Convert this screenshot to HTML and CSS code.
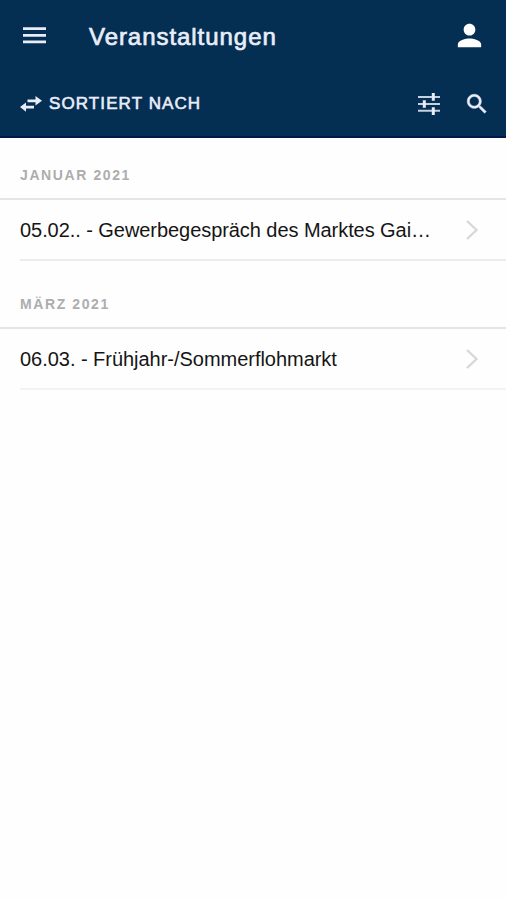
FILE: index.html
```
<!DOCTYPE html>
<html lang="de">
<head>
  <meta charset="UTF-8">
  <meta name="viewport" content="width=device-width, initial-scale=1.0">
  <title>Veranstaltungen</title>
  <link rel="stylesheet" href="styles.css">
</head>
<body>

  <header class="header">
    <div class="title-bar">
      <svg class="icon-menu" width="23" height="17" viewBox="0 0 23 17">
        <path d="M0 .3h23v2.8H0zM0 7h23v2.8H0zM0 13.5h23v2.8H0z"/>
      </svg>
      <h1>Veranstaltungen</h1>
      <svg class="icon-user" width="35" height="35" viewBox="0 0 24 24">
        <path d="M12 12c2.21 0 4-1.79 4-4s-1.79-4-4-4-4 1.79-4 4 1.79 4 4 4zm0 2c-2.67 0-8 1.34-8 4v2h16v-2c0-2.66-5.33-4-8-4z"/>
      </svg>
    </div>

    <div class="tool-bar">
      <svg class="icon-sort" width="22" height="16" viewBox="0 0 22 16">
        <path d="M7.500 3.600h8V0L22 4.800l-6.500 4.600V6.200h-8zM14 9.800H6V6.400L0 11l6 4.800v-3.400h8z"/>
      </svg>
      <span class="sort-label">SORTIERT NACH</span>
      <svg class="icon-filter" width="22" height="22" viewBox="0 0 22 22">
        <path class="line" d="M0 4h22M0 11h22M0 17.800h22"/>
        <path class="knob" d="M15.300 0v7.800M6.300 7.300v7.400M15.300 14.200V22"/>
      </svg>
      <svg class="icon-search" width="26" height="26" viewBox="0 0 24 24">
        <path d="M15.500 14h-.79l-.28-.27C15.410 12.590 16 11.110 16 9.500 16 5.910 13.090 3 9.500 3S3 5.910 3 9.500 5.910 16 9.500 16c1.610 0 3.090-.59 4.230-1.570l.27.28v.79l5 4.990L20.490 19l-4.990-5zm-6 0C7.010 14 5 11.990 5 9.500S7.010 5 9.500 5 14 7.010 14 9.500 11.990 14 9.500 14z"/>
      </svg>
    </div>
  </header>

  <main>
    <section class="month">
      <h2>JANUAR 2021</h2>
      <div class="event">
        <span class="event-name long">05.02.. - Gewerbegespräch des Marktes Gai…</span>
        <svg class="chevron" width="13" height="20" viewBox="0 0 13 20"><path d="M1 1l9.500 9L1 19"/></svg>
      </div>
    </section>

    <section class="month march">
      <h2>MÄRZ 2021</h2>
      <div class="event">
        <span class="event-name">06.03. - Frühjahr-/Sommerflohmarkt</span>
        <svg class="chevron" width="13" height="20" viewBox="0 0 13 20"><path d="M1 1l9.500 9L1 19"/></svg>
      </div>
    </section>
  </main>

</body>
</html>
```

FILE: styles.css
```
* {
  box-sizing: border-box;
}

body {
  margin: 0;
  min-height: 100vh;
  background: #fefefe;
  font-family: "Liberation Sans", Arial, sans-serif;
}

/* Header */
.header {
  height: 138px;
  background: #042e52;
  border-bottom: 2px solid #02184b;
  color: #e9edf8;
}

.header svg {
  display: block;
  fill: #e9edf8;
}

.title-bar {
  display: flex;
  align-items: center;
  height: 70px;
  padding: 0 19px 0 23px;
}

h1 {
  margin: 3px 0 0 43px;
  font-size: 24px;
  font-weight: normal;
  line-height: 28px;
  letter-spacing: 0.95px;
  -webkit-text-stroke: 0.7px #e9edf8;
}

.header .icon-user {
  margin-left: auto;
  fill: #fff;
}

.tool-bar {
  display: flex;
  align-items: center;
  height: 67px;
  padding: 0 16px 0 20px;
}

.sort-label {
  margin-left: 7px;
  font-size: 17px;
  line-height: 22px;
  letter-spacing: 1.1px;
  -webkit-text-stroke: 0.6px #e9edf8;
}

.icon-filter {
  margin-left: auto;
}

.icon-filter .line {
  stroke: #c5d0e0;
  stroke-width: 2;
}

.icon-filter .knob {
  stroke: #e9edf8;
  stroke-width: 3;
}

.icon-search {
  margin-left: 24px;
  stroke: #e9edf8;
  stroke-width: 0.5;
}

/* Event list */
h2 {
  display: flex;
  align-items: center;
  height: 62px;
  margin: 0;
  padding: 14px 20px 0;
  border-bottom: 2px solid #e5e5e5;
  color: #adadad;
  font-size: 14px;
  font-weight: bold;
  letter-spacing: 1.6px;
}

.event {
  display: flex;
  align-items: center;
  justify-content: space-between;
  height: 61px;
  margin-left: 20px;
  padding-right: 27px;
  border-bottom: 2px solid #ececec;
}

.event-name {
  padding-top: 2px;
  color: #151515;
  font-size: 20px;
  white-space: nowrap;
}

.long {
  letter-spacing: -0.06px;
}

.chevron {
  fill: none;
  stroke: #d8d8d8;
  stroke-width: 2.4;
}

.march h2 {
  height: 68px;
  padding-top: 20px;
}

.march .event {
  height: 61px;
  border-bottom-color: #f3f3f3;
}

.march .event-name {
  letter-spacing: -0.03px;
}
```
